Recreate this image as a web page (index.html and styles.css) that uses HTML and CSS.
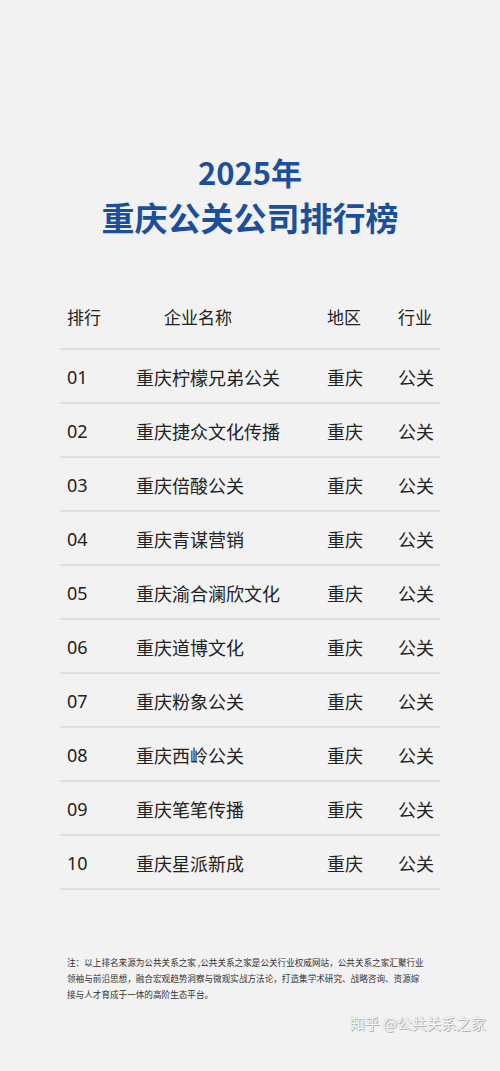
FILE: index.html
```html
<!DOCTYPE html>
<html>
  <head>
    <title>2025年重庆公关公司排行榜</title>
    <meta charset="utf-8" />
    <meta name="viewport" content="width=device-width, initial-scale=1" />
    <link rel="stylesheet" href="styles.css">
  </head>
  <body>
    <div class="page">
      <h1 class="title">
        <span class="year">2025年</span>
        <span class="sub">重庆公关公司排行榜</span>
      </h1>

      <div class="table">
        <div class="row head">
          <span class="rank">排行</span>
          <span class="name center">企业名称</span>
          <span class="area">地区</span>
          <span class="trade">行业</span>
        </div>
        <div class="row">
          <span class="rank">01</span>
          <span class="name">重庆柠檬兄弟公关</span>
          <span class="area">重庆</span>
          <span class="trade">公关</span>
        </div>
        <div class="row">
          <span class="rank">02</span>
          <span class="name">重庆捷众文化传播</span>
          <span class="area">重庆</span>
          <span class="trade">公关</span>
        </div>
        <div class="row">
          <span class="rank">03</span>
          <span class="name">重庆倍酸公关</span>
          <span class="area">重庆</span>
          <span class="trade">公关</span>
        </div>
        <div class="row">
          <span class="rank">04</span>
          <span class="name">重庆青谋营销</span>
          <span class="area">重庆</span>
          <span class="trade">公关</span>
        </div>
        <div class="row">
          <span class="rank">05</span>
          <span class="name">重庆渝合澜欣文化</span>
          <span class="area">重庆</span>
          <span class="trade">公关</span>
        </div>
        <div class="row">
          <span class="rank">06</span>
          <span class="name">重庆道博文化</span>
          <span class="area">重庆</span>
          <span class="trade">公关</span>
        </div>
        <div class="row">
          <span class="rank">07</span>
          <span class="name">重庆粉象公关</span>
          <span class="area">重庆</span>
          <span class="trade">公关</span>
        </div>
        <div class="row">
          <span class="rank">08</span>
          <span class="name">重庆西岭公关</span>
          <span class="area">重庆</span>
          <span class="trade">公关</span>
        </div>
        <div class="row">
          <span class="rank">09</span>
          <span class="name">重庆笔笔传播</span>
          <span class="area">重庆</span>
          <span class="trade">公关</span>
        </div>
        <div class="row">
          <span class="rank">10</span>
          <span class="name">重庆星派新成</span>
          <span class="area">重庆</span>
          <span class="trade">公关</span>
        </div>
      </div>

      <p class="note">
        注：以上排名来源为公共关系之家 ,公共关系之家是公关行业权威网站，公共关系之家汇聚行业<br />
        领袖与前沿思想，融合宏观趋势洞察与微观实战方法论，打造集学术研究、战略咨询、资源嫁<br />
        接与人才育成于一体的高阶生态平台。
      </p>

      <div class="mark">知乎 @公共关系之家</div>
    </div>
  </body>
</html>
```

FILE: styles.css
```css
* {
  box-sizing: border-box;
}
html,
body {
  margin: 0;
  background: #f2f2f2;
  font-family: "Noto Sans CJK SC", "Noto Sans", sans-serif;
  color: #222;
}

.page {
  width: 500px;
  height: 1071px;
  padding-top: 150px;
  position: relative;
}

.title {
  margin: 0;
  text-align: center;
  color: #1b4f9b;
  font-weight: 700;
}
.title span {
  display: block;
}
.year {
  font-size: 31px;
  line-height: 44px;
}
.sub {
  font-size: 33px;
  line-height: 46px;
}

.table {
  margin: 48px 60px 0 60px;
}

.row {
  display: flex;
  align-items: center;
  height: 54px;
  border-bottom: 2px solid #dedede;
  font-size: 18px;
  padding-top: 1px;
}
.row.head {
  height: 62px;
  font-size: 17px;
  padding-top: 0;
  padding-bottom: 3px;
}
.rank {
  width: 76px;
  padding-left: 7px;
  font-family: "Noto Sans", "Noto Sans CJK SC", sans-serif;
}
.head .rank {
  font-family: "Noto Sans CJK SC", sans-serif;
}
.name {
  width: 191px;
}
.name.center {
  padding-left: 28px;
}
.area {
  width: 71px;
}
.trade {
  width: 40px;
}

.note {
  margin: 64px 0 0 67px;
  font-size: 8.6px;
  line-height: 16px;
  color: #333;
}

.mark {
  position: absolute;
  left: 350px;
  top: 1012px;
  font-size: 14.8px;
  color: #fafafa;
  text-shadow: 0 0 1px #9a9a9a, 1px 1px 0 #b5b5b5;
}
```
